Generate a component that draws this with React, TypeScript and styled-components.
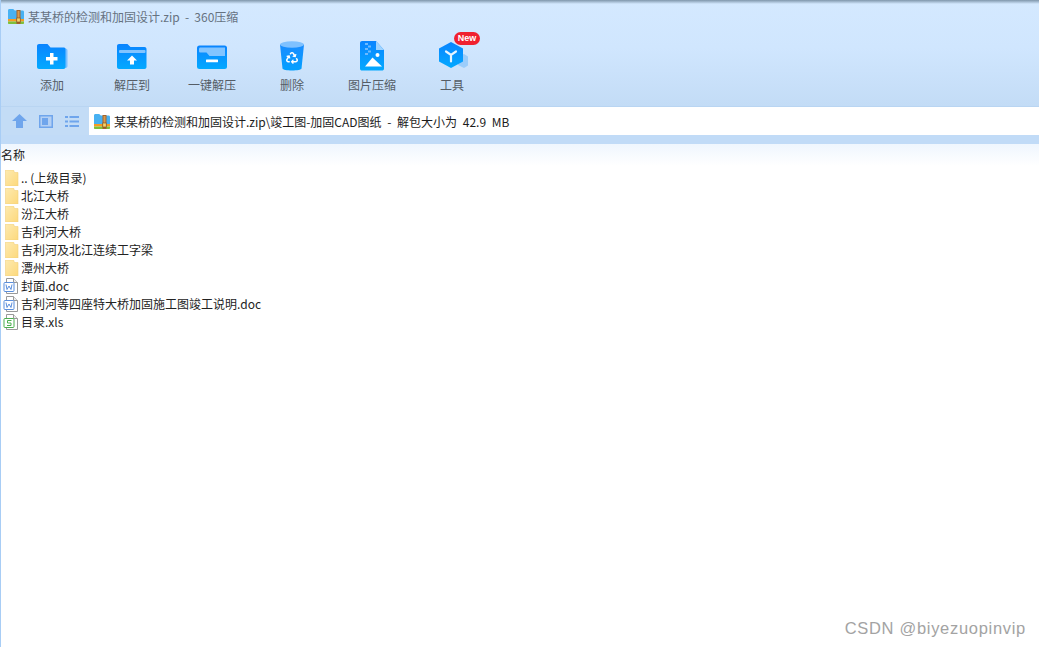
import styled, { createGlobalStyle } from "styled-components";
import { FaRecycle } from "react-icons/fa";

const GlobalStyle = createGlobalStyle`
  html, body {
    margin: 0;
    padding: 0;
    background: #fff;
  }
  * {
    box-sizing: border-box;
  }
`;

const Page = styled.div`
  width: 1039px;
  height: 647px;
  overflow: hidden;
  display: flex;
  flex-direction: column;
  position: relative;
  background: #fff;
  font-family: "Noto Sans CJK SC", "Liberation Sans", sans-serif;
  font-size: 12px;
  color: #222;
  border-left: 1px solid #a8cdf5;
`;

const TopBand = styled.div`
  height: 107px;
  flex: none;
  padding-top: 3px;
  background:
    linear-gradient(#7f96ab 0, #a9bfd5 2px, #d4e9ff 4px, transparent 4px),
    linear-gradient(#d4e9ff 0%, #d0e6fe 45%, #c3dcf6 100%);
  border-bottom: 1px solid #b9d5f2;
`;

const TitleBar = styled.div`
  height: 29px;
  display: flex;
  align-items: center;
  gap: 4px;
  padding: 0 0 2px 7px;
  color: #66727f;
  line-height: 16px;
  word-spacing: 2.5px;
`;

const Toolbar = styled.div`
  display: flex;
  padding: 8px 0 0 11px;
`;

const ToolItem = styled.div`
  width: 80px;
  display: flex;
  flex-direction: column;
  align-items: center;
  gap: 5px;
  position: relative;
  color: #555d66;
  line-height: 16px;
`;

const Badge = styled.span`
  position: absolute;
  top: -8px;
  left: 42px;
  width: 26px;
  height: 13px;
  border-radius: 7px;
  background: #f0202f;
  color: #fff;
  font-family: "Liberation Sans", sans-serif;
  font-size: 9px;
  font-weight: 700;
  line-height: 13px;
  text-align: center;
`;

const AddressRow = styled.div`
  height: 28px;
  flex: none;
  display: flex;
  background: #c3dcf6;
`;

const NavButtons = styled.div`
  width: 88px;
  flex: none;
  display: flex;
  align-items: center;
  gap: 12px;
  padding-left: 11px;
`;

const AddressBox = styled.div`
  flex: 1;
  display: flex;
  align-items: center;
  gap: 4px;
  padding-left: 5px;
  background: #fff;
  color: #1c1c1c;
  word-spacing: 3px;
`;

const Strip = styled.div`
  height: 9px;
  flex: none;
  background: #c1dbf7;
`;

const ListPanel = styled.div`
  flex: 1;
  background: linear-gradient(#eff6fe 0, #fff 22px);
`;

const ColumnHeader = styled.div`
  height: 25px;
  display: flex;
  align-items: center;
  color: #1c1c1c;
  line-height: 16px;
  padding-bottom: 3px;
`;

const FileList = styled.ul`
  list-style: none;
  margin: 0;
  padding: 0;
`;

const FileRow = styled.li`
  height: 18px;
  display: flex;
  align-items: center;
  padding-left: 2px;
  gap: 2px;
  color: #222;
  line-height: 16px;
`;

const Watermark = styled.div`
  position: absolute;
  right: 13px;
  bottom: 9px;
  font-family: "Liberation Sans", sans-serif;
  font-size: 16.5px;
  letter-spacing: 0.7px;
  line-height: 20px;
  color: #a3a3a3;
`;

function ZipIcon() {
  return (
    <svg width="16" height="15" viewBox="0 0 16 15">
      <path d="M0 1.5C0 .7.6 0 1.4 0h3.8l1.6 1.5h7.8c.8 0 1.4.6 1.4 1.4V10H0z" fill="#48b1f2" />
      <rect y="10" width="16" height="2.5" fill="#f59c22" />
      <path d="M0 12.5h16V14c0 .6-.4 1-1 1H1c-.6 0-1-.4-1-1z" fill="#7fbf3a" />
      <rect x="8.5" y="1" width="4" height="14" fill="#a4642a" />
      <rect x="9.5" y="2" width="2" height="7" fill="#d89a4e" />
      <rect x="8.8" y="9" width="3.4" height="4" fill="#f6d36b" stroke="#7a4a1c" strokeWidth=".6" />
    </svg>
  );
}

function FolderGradient({ id }: { id: string }) {
  return (
    <defs>
      <linearGradient id={id} x1="0" y1="0" x2="0" y2="1">
        <stop offset="0" stopColor="#0a84ff" />
        <stop offset="1" stopColor="#03a9ff" />
      </linearGradient>
    </defs>
  );
}

function AddIcon() {
  return (
    <svg width="32" height="32" viewBox="0 0 32 32">
      <FolderGradient id="addFill" />
      <path d="M28 8.500h1.500c1.200 0 2 .8 2 2V26c0 1.200-.8 2-2 2H28z" fill="#7cc0ff" />
      <path d="M1 6c0-1.100.9-2 2-2h8.500l3 3.500H28c1.100 0 1.500.8 1.500 1.500v18c0 1.100-.8 2-2 2H3c-1.100 0-2-.9-2-2z" fill="url(#addFill)" />
      <path d="M14 13h3.500v4H21.500v3.500h-4v4H14v-4h-4V17h4z" fill="#fff" />
    </svg>
  );
}

function ExtractIcon() {
  return (
    <svg width="32" height="32" viewBox="0 0 32 32">
      <FolderGradient id="extractFill" />
      <path d="M1 6c0-1.100.9-2 2-2h8.500l3 3h14c1.100 0 2 .9 2 2v18c0 1.100-.9 2-2 2H3c-1.100 0-2-.9-2-2z" fill="url(#extractFill)" />
      <rect x="3" y="10" width="26.500" height="3" rx="1" fill="#82c4ff" />
      <path d="M16 15.500l5 5h-3v4h-4v-4h-3z" fill="#fff" />
    </svg>
  );
}

function OneClickIcon() {
  return (
    <svg width="32" height="32" viewBox="0 0 32 32">
      <FolderGradient id="oneFill" />
      <rect x="1" y="5.500" width="30" height="23.500" rx="2.500" fill="url(#oneFill)" />
      <path d="M3 9c0-.8.5-1.500 1.500-1.500H29V16H13.500l-3-3.500H4.500C3.600 12.500 3 12 3 11z" fill="#82c4ff" />
      <rect x="10" y="19.500" width="12" height="2.800" rx=".5" fill="#fff" />
    </svg>
  );
}

function TrashIcon() {
  return (
    <svg width="32" height="32" viewBox="0 0 32 32">
      <defs>
        <linearGradient id="trashFill" x1="0" y1="0" x2="0" y2="1">
          <stop offset="0" stopColor="#1a8cff" />
          <stop offset="1" stopColor="#03a0ff" />
        </linearGradient>
      </defs>
      <path d="M4 4.500h24l-2.500 24c-.2 1.200-4.500 2-9.500 2s-9.300-.8-9.500-2z" fill="url(#trashFill)" />
      <ellipse cx="16" cy="4.500" rx="12" ry="3.200" fill="#7fc1ff" />
      <FaRecycle x={10} y={12} size={12} color="#fff" />
    </svg>
  );
}

function ImageZipIcon() {
  return (
    <svg width="32" height="32" viewBox="0 0 32 32">
      <FolderGradient id="imageFill" />
      <path d="M6 1h14l8 9v19c0 .9-.9 1.500-2 1.500H6c-1.100 0-2-.7-2-1.500V3c0-1.100.9-2 2-2z" fill="url(#imageFill)" />
      <path d="M20 1l8 9h-8z" fill="#9fd3ff" />
      <g fill="#6db9ff">
        <rect x="9" y="3" width="3" height="2" />
        <rect x="12" y="5.500" width="3" height="2" />
        <rect x="9" y="8" width="3" height="2" />
        <rect x="12" y="10.500" width="3" height="2" />
        <rect x="9" y="13" width="3" height="2" />
      </g>
      <circle cx="21.500" cy="15" r="2" fill="#fff" />
      <path d="M9 26.500l7.500-9 9.500 9z" fill="#fff" />
    </svg>
  );
}

function ToolsIcon() {
  return (
    <svg width="32" height="32" viewBox="0 0 32 32">
      <FolderGradient id="toolFill" />
      <path d="M28 14l5 3v8l-5 3-6-3v-8z" fill="#9bcdfb" />
      <path d="M15 2l12 6.500v13L15 28 3 21.500v-13z" fill="url(#toolFill)" />
      <path d="M10 11.500l5 3.500 5-3.500M15 15v6.500" fill="none" stroke="#e6f4ff" strokeWidth="2.200" strokeLinecap="round" />
    </svg>
  );
}

function UpIcon() {
  return (
    <svg width="15" height="14" viewBox="0 0 15 14">
      <path d="M7.500 0L15 7h-4v7H4V7H0z" fill="#6fa5ec" />
    </svg>
  );
}

function PaneIcon() {
  return (
    <svg width="14" height="13" viewBox="0 0 14 13">
      <rect x=".75" y=".75" width="12.500" height="11.500" fill="#b4d0f4" stroke="#6fa5ec" strokeWidth="1.500" />
      <rect x="3" y="3" width="6" height="7" fill="#6fa5ec" />
    </svg>
  );
}

function ListIcon() {
  return (
    <svg width="14" height="11" viewBox="0 0 14 11">
      <g fill="#6fa5ec">
        <rect width="3" height="2" />
        <rect x="4.500" width="9.500" height="2" />
        <rect y="4.500" width="3" height="2" />
        <rect x="4.500" y="4.500" width="9.500" height="2" />
        <rect y="9" width="3" height="2" />
        <rect x="4.500" y="9" width="9.500" height="2" />
      </g>
    </svg>
  );
}

function FolderIcon() {
  return (
    <svg width="16" height="16" viewBox="0 0 16 16">
      <defs>
        <linearGradient id="rowFolder" x1="0" y1="0" x2="1" y2="1">
          <stop offset="0" stopColor="#fdeab0" />
          <stop offset="1" stopColor="#fdd97c" />
        </linearGradient>
      </defs>
      <path d="M2.500 0h8l1 2.500H15V16H2.500z" fill="url(#rowFolder)" stroke="#f2d07e" strokeWidth=".6" />
    </svg>
  );
}

function DocFileIcon({ color, letter }: { color: string; letter: string }) {
  return (
    <svg width="16" height="16" viewBox="0 0 16 16">
      <path d="M3.500.5h7l4 4v11h-11z" fill="#fff" stroke="#9a9a9a" />
      <path d="M10.500.5v4h4" fill="#eee" stroke="#9a9a9a" />
      <rect x="1" y="4.500" width="10" height="9" rx="1" fill="#fff" stroke={color} />
      {letter === "W" ? (
        <path d="M3 6.500l1 5 2-3.500 2 3.500 1-5" fill="none" stroke={color} />
      ) : (
        <path d="M8.500 6.500h-4v2.500h3.500v2.500h-4" fill="none" stroke={color} />
      )}
    </svg>
  );
}

const tools = [
  { label: "添加", icon: <AddIcon /> },
  { label: "解压到", icon: <ExtractIcon /> },
  { label: "一键解压", icon: <OneClickIcon /> },
  { label: "删除", icon: <TrashIcon /> },
  { label: "图片压缩", icon: <ImageZipIcon /> },
  { label: "工具", icon: <ToolsIcon />, badge: "New" },
];

const files = [
  { name: ".. (上级目录)", kind: "folder" },
  { name: "北江大桥", kind: "folder" },
  { name: "汾江大桥", kind: "folder" },
  { name: "吉利河大桥", kind: "folder" },
  { name: "吉利河及北江连续工字梁", kind: "folder" },
  { name: "潭州大桥", kind: "folder" },
  { name: "封面.doc", kind: "doc" },
  { name: "吉利河等四座特大桥加固施工图竣工说明.doc", kind: "doc" },
  { name: "目录.xls", kind: "xls" },
];

function RowIcon({ kind }: { kind: string }) {
  if (kind === "folder") return <FolderIcon />;
  if (kind === "doc") return <DocFileIcon color="#5b8fdc" letter="W" />;
  return <DocFileIcon color="#4caf50" letter="S" />;
}

export default function App(): JSX.Element {
  return (
    <Page>
      <GlobalStyle />
      <TopBand>
        <TitleBar>
          <ZipIcon />
          <span>某某桥的检测和加固设计.zip - 360压缩</span>
        </TitleBar>
        <Toolbar>
          {tools.map((tool) => (
            <ToolItem key={tool.label}>
              {tool.icon}
              <span>{tool.label}</span>
              {tool.badge && <Badge>{tool.badge}</Badge>}
            </ToolItem>
          ))}
        </Toolbar>
      </TopBand>
      <AddressRow>
        <NavButtons>
          <UpIcon />
          <PaneIcon />
          <ListIcon />
        </NavButtons>
        <AddressBox>
          <ZipIcon />
          <span>某某桥的检测和加固设计.zip\竣工图-加固CAD图纸 - 解包大小为 42.9 MB</span>
        </AddressBox>
      </AddressRow>
      <Strip />
      <ListPanel>
        <ColumnHeader>名称</ColumnHeader>
        <FileList>
          {files.map((file) => (
            <FileRow key={file.name}>
              <RowIcon kind={file.kind} />
              <span>{file.name}</span>
            </FileRow>
          ))}
        </FileList>
      </ListPanel>
      <Watermark>CSDN @biyezuopinvip</Watermark>
    </Page>
  );
}
